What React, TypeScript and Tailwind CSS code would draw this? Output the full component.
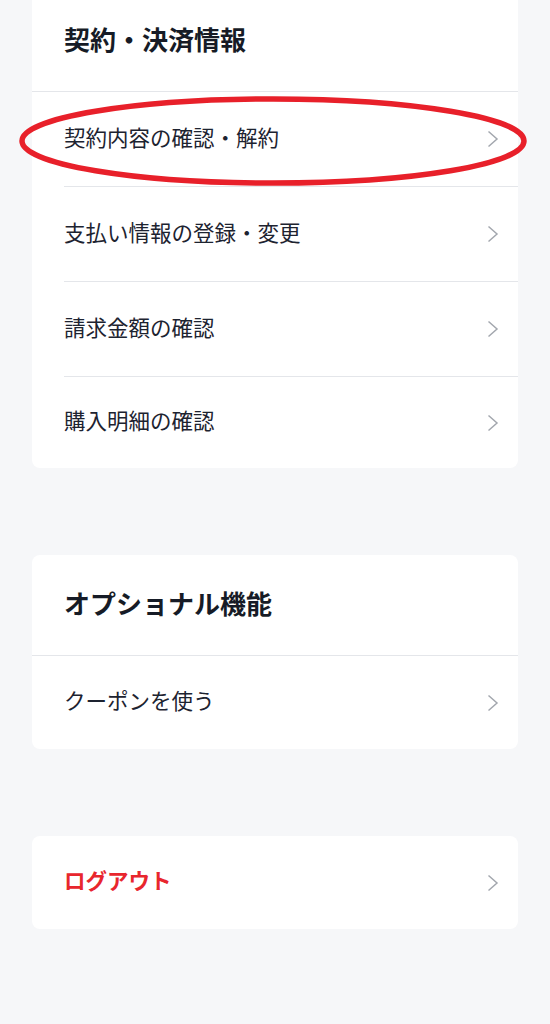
const sections = [
  {
    title: "契約・決済情報",
    items: ["契約内容の確認・解約", "支払い情報の登録・変更", "請求金額の確認", "購入明細の確認"],
    lastH: "h-[91px]",
  },
  {
    title: "オプショナル機能",
    items: ["クーポンを使う"],
    lastH: "h-[93px]",
  },
];

function Chevron() {
  return (
    <svg width="12" height="18" viewBox="0 0 12 18" className="text-[#a3a7ae]">
      <polyline points="1.5,1.5 10,9 1.5,16.5" fill="none" stroke="currentColor" strokeWidth="1.5" />
    </svg>
  );
}

function Row({ label, lastH, danger }: { label: string; lastH?: string; danger?: boolean }) {
  return (
    <div
      className={`ml-8 flex items-center justify-between pr-[19px] ${
        lastH ? lastH : "h-[95px] border-b border-[#e4e6ea]"
      }`}
    >
      <span className={`pb-[4px] text-[21.5px] ${danger ? "font-bold text-[#e8262d]" : "text-[#1d2330]"}`}>
        {label}
      </span>
      <Chevron />
    </div>
  );
}

export default function App() {
  return (
    <div
      className="min-h-[1024px] w-full overflow-hidden bg-[#f6f7f9] px-8 pb-24"
      style={{ fontFamily: '"Noto Sans CJK JP", "Noto Sans", sans-serif' }}
    >
      <div className="-mt-[9px] flex flex-col gap-[87px]">
        {sections.map((s, si) => (
          <div key={s.title} className="relative rounded-lg bg-white">
            <div className="flex h-[101px] items-center border-b border-[#e4e6ea] px-8 pb-[5px]">
              <h2 className="text-[26px] font-bold text-[#161b26]">{s.title}</h2>
            </div>
            {s.items.map((it, i) => (
              <Row key={it} label={it} lastH={i === s.items.length - 1 ? s.lastH : undefined} />
            ))}
            {si === 0 && (
              <svg
                className="pointer-events-none absolute left-[-14px] top-[104px]"
                width="512"
                height="96"
                viewBox="0 0 512 96"
              >
                <ellipse cx="255" cy="46" rx="251" ry="42" fill="none" stroke="#e8202a" strokeWidth="5.5" />
              </svg>
            )}
          </div>
        ))}
        <div className="rounded-lg bg-white">
          <Row label="ログアウト" lastH="h-[93px]" danger />
        </div>
      </div>
    </div>
  );
}
